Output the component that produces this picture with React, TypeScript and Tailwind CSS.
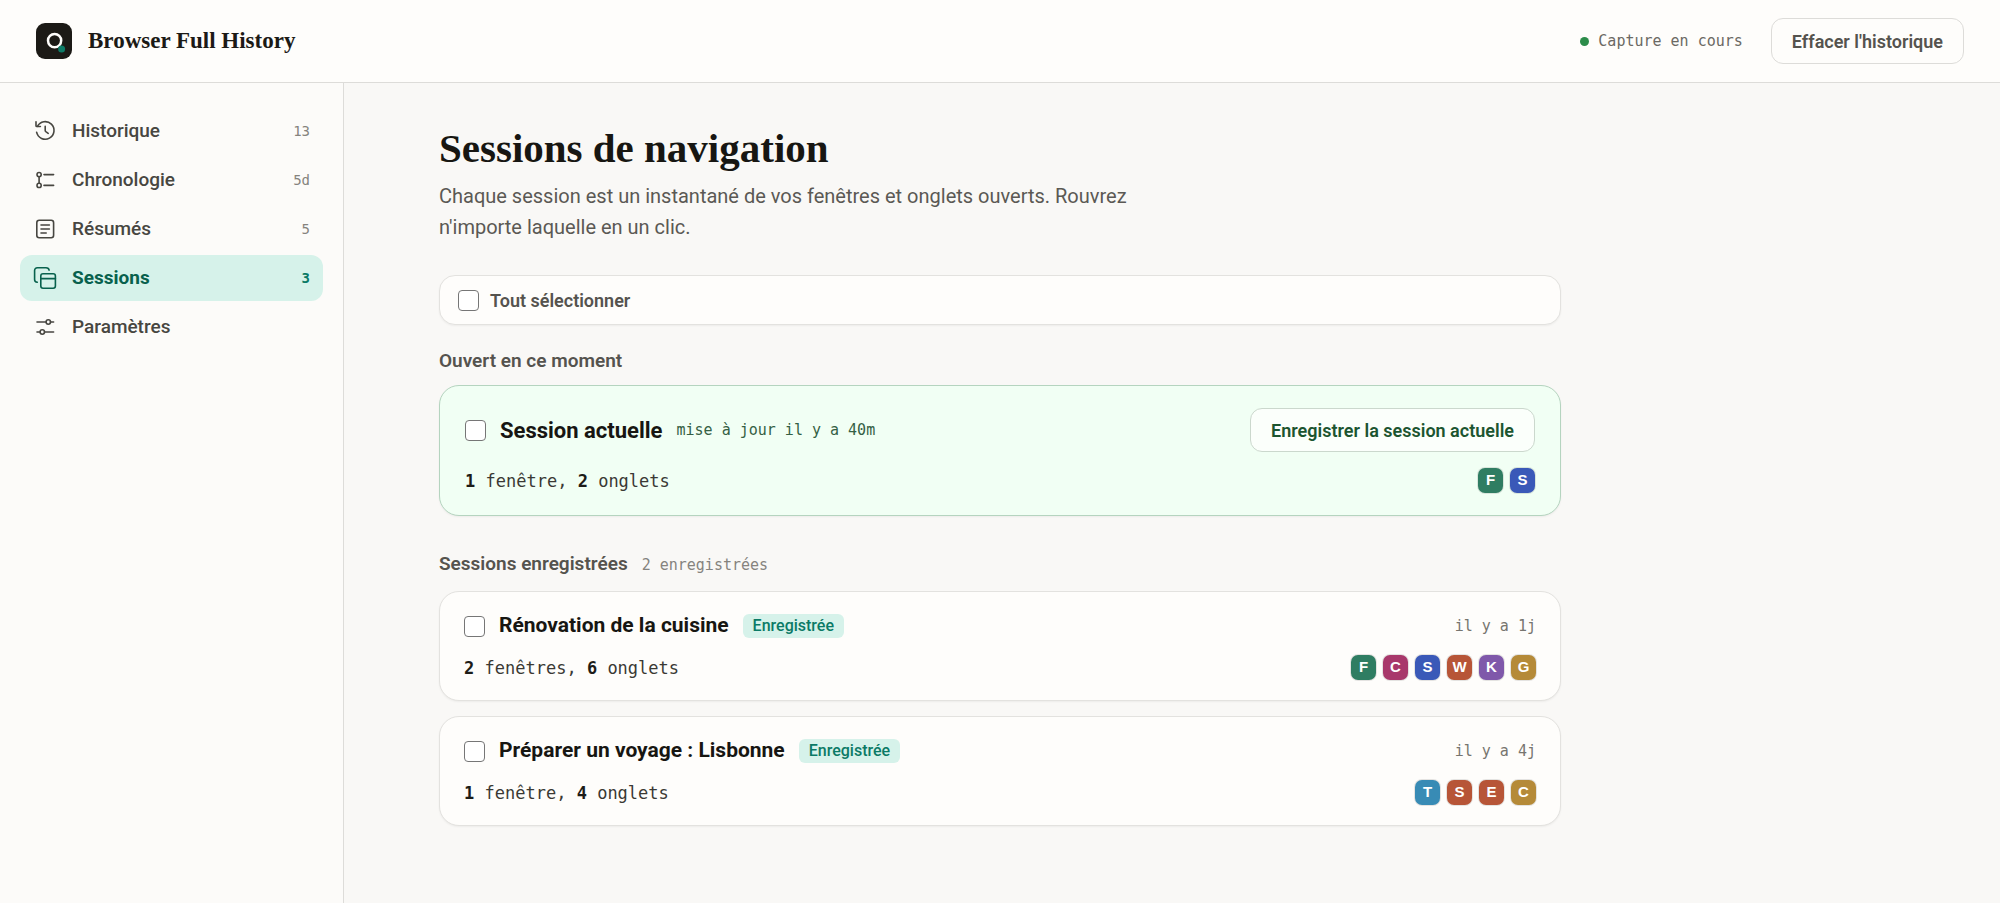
import React, { useState } from "react";

type NavItem = { id: string; label: string; count?: string; icon: React.ReactNode };
type Site = { letter: string; color: string };
type SavedSession = {
  id: string;
  title: string;
  windows: number;
  tabs: number;
  age: string;
  sites: Site[];
};

const iconClass = "size-6 shrink-0 fill-none stroke-current";

const HistoryIcon = () => (
  <svg viewBox="0 0 24 24" className={iconClass} strokeWidth="1.6" strokeLinecap="round" strokeLinejoin="round" aria-hidden="true">
    <path d="M4.4 7.4A8.8 8.8 0 1 1 3.6 13.2" />
    <path d="M3 2.8v3.9c0 .5.3.8.8.8h3.6" />
    <path d="M12.2 7.4v4.2c0 .5.2.8.6 1.1l2.4 1.7" />
  </svg>
);

const TimelineIcon = () => (
  <svg viewBox="0 0 24 24" className={iconClass} strokeWidth="1.6" strokeLinecap="round" strokeLinejoin="round" aria-hidden="true">
    <circle cx="6.1" cy="6.6" r="2.1" />
    <circle cx="6.1" cy="17.4" r="2.1" />
    <path d="M6.1 8.7v6.6M11 6.6h9.6M11 17.4h9.6" />
  </svg>
);

const SummaryIcon = () => (
  <svg viewBox="0 0 24 24" className={iconClass} strokeWidth="1.6" strokeLinecap="round" strokeLinejoin="round" aria-hidden="true">
    <rect x="3.8" y="3.3" width="16.8" height="17.4" rx="2.4" />
    <path d="M8 8h8.4M8 12h8.4M8 16h5.2" />
  </svg>
);

const SessionsIcon = () => (
  <svg viewBox="0 0 24 24" className={iconClass} strokeWidth="1.6" strokeLinecap="round" strokeLinejoin="round" aria-hidden="true">
    <rect x="7.8" y="7.8" width="14.6" height="14.4" rx="2.2" />
    <path d="M7.8 12.6h14.6" />
    <path d="M4.3 16.2C2.6 16 1.6 15 1.6 13.4V4.6C1.6 2.8 2.7 1.8 4.4 1.8H13C14.8 1.8 15.9 2.6 16.1 4.2" />
  </svg>
);

const SettingsIcon = () => (
  <svg viewBox="0 0 24 24" className={iconClass} strokeWidth="1.6" strokeLinecap="round" strokeLinejoin="round" aria-hidden="true">
    <path d="M4 7h9M17.6 7h3M4 17h3M11.6 17h9" />
    <circle cx="15.3" cy="7" r="2.2" />
    <circle cx="9.3" cy="17" r="2.2" />
  </svg>
);

const navItems: NavItem[] = [
  { id: "history", label: "Historique", count: "13", icon: <HistoryIcon /> },
  { id: "timeline", label: "Chronologie", count: "5d", icon: <TimelineIcon /> },
  { id: "summaries", label: "Résumés", count: "5", icon: <SummaryIcon /> },
  { id: "sessions", label: "Sessions", count: "3", icon: <SessionsIcon /> },
  { id: "settings", label: "Paramètres", icon: <SettingsIcon /> },
];

const green = "bg-[#2f7d62]";
const pink = "bg-[#a8386b]";
const blue = "bg-[#3a59b8]";
const rust = "bg-[#b75537]";
const violet = "bg-[#7f58aa]";
const gold = "bg-[#b58a38]";
const sky = "bg-[#388bb5]";

const currentSites: Site[] = [
  { letter: "F", color: green },
  { letter: "S", color: blue },
];

const savedSessions: SavedSession[] = [
  {
    id: "kitchen",
    title: "Rénovation de la cuisine",
    windows: 2,
    tabs: 6,
    age: "il y a 1j",
    sites: [
      { letter: "F", color: green },
      { letter: "C", color: pink },
      { letter: "S", color: blue },
      { letter: "W", color: rust },
      { letter: "K", color: violet },
      { letter: "G", color: gold },
    ],
  },
  {
    id: "lisbon",
    title: "Préparer un voyage : Lisbonne",
    windows: 1,
    tabs: 4,
    age: "il y a 4j",
    sites: [
      { letter: "T", color: sky },
      { letter: "S", color: rust },
      { letter: "E", color: rust },
      { letter: "C", color: gold },
    ],
  },
];

const allIds = ["current", ...savedSessions.map((s) => s.id)];

function Checkbox({ id, checked, onChange }: { id: string; checked: boolean; onChange: () => void }) {
  return (
    <input
      id={id}
      type="checkbox"
      checked={checked}
      onChange={onChange}
      className="size-[21px] shrink-0 appearance-none rounded border border-[#767676] bg-white checked:border-[#0b7a66] checked:bg-[#0b7a66]"
    />
  );
}

function Counts({ windows, tabs }: { windows: number; tabs: number }) {
  return (
    <p className="font-['DejaVu_Sans_Mono',monospace] text-[17px] leading-6 text-[#3a3934]">
      <strong className="font-bold text-[#1d1c18]">{windows}</strong> {windows > 1 ? "fenêtres" : "fenêtre"},{" "}
      <strong className="font-bold text-[#1d1c18]">{tabs}</strong> onglets
    </p>
  );
}

function Sites({ sites }: { sites: Site[] }) {
  return (
    <ul className="flex gap-[7px]">
      {sites.map((site) => (
        <li
          key={site.letter}
          className={`flex size-[25px] items-center justify-center rounded-[7px] font-['Liberation_Sans',sans-serif] text-[15px] font-bold text-white ring-1 ring-black/10 ${site.color}`}
        >
          {site.letter}
        </li>
      ))}
    </ul>
  );
}

export default function App() {
  const [active, setActive] = useState("sessions");
  const [selected, setSelected] = useState<string[]>([]);
  const toggle = (id: string) =>
    setSelected((prev) => (prev.includes(id) ? prev.filter((x) => x !== id) : [...prev, id]));
  const allSelected = selected.length === allIds.length;

  return (
    <div className="flex min-h-screen flex-col bg-[#f9f8f6] font-['Roboto',sans-serif] text-[#171612]">
      <header className="flex h-[83px] items-center justify-between border-b border-[#dddcd9] bg-[#fefdfb] px-9">
        <div className="flex items-center gap-4">
          <svg viewBox="0 0 36 36" className="size-9" aria-hidden="true">
            <rect width="36" height="36" rx="9" fill="#1c1a16" />
            <circle cx="18.6" cy="17.6" r="6.6" fill="none" stroke="#fefdfb" strokeWidth="2.5" />
            <circle cx="25.6" cy="26" r="3.5" fill="#0e7c68" />
          </svg>
          <span className="font-['Liberation_Serif',serif] text-[23px] font-bold text-[#1c1a16]">Browser Full History</span>
        </div>
        <div className="flex items-center gap-7">
          <p className="flex items-center gap-[9px] font-['DejaVu_Sans_Mono',monospace] text-[15px] text-[#6b6963]">
            <span className="size-[9px] rounded-full bg-[#2c8c4a]" />
            Capture en cours
          </p>
          <button type="button" className="h-[46px] rounded-xl border border-[#dddcd9] bg-[#fefdfb] px-5 text-[18px] font-semibold text-[#55534e]">
            Effacer l'historique
          </button>
        </div>
      </header>

      <div className="flex flex-1">
        <nav className="flex w-[344px] shrink-0 flex-col gap-[3px] border-r border-[#dddcd9] bg-[#fcfbf9] px-5 pt-[25px]">
          {navItems.map((item) => {
            const on = item.id === active;
            return (
              <button
                key={item.id}
                type="button"
                aria-current={on ? "page" : undefined}
                onClick={() => setActive(item.id)}
                className={`flex h-[46px] items-center gap-[15px] rounded-xl px-[13px] text-left text-[19px] ${
                  on ? "bg-[#d6f2ea] font-bold text-[#08614d]" : "font-medium text-[#474641]"
                }`}
              >
                {item.icon}
                <span className="flex-1">{item.label}</span>
                {item.count && (
                  <span className={`font-['DejaVu_Sans_Mono',monospace] text-[14px] ${on ? "text-[#0b7a66]" : "text-[#85837e]"}`}>
                    {item.count}
                  </span>
                )}
              </button>
            );
          })}
        </nav>

        <main className="min-w-0 flex-1 px-[95px] pt-10">
          <div className="max-w-[1122px]">
            <h1 className="font-['Liberation_Serif',serif] text-[41px] leading-[50px] font-bold text-[#171612]">Sessions de navigation</h1>
            <p className="mt-2 max-w-[730px] text-[20px] leading-[31px] text-[#5b5954]">
              Chaque session est un instantané de vos fenêtres et onglets ouverts. Rouvrez n'importe laquelle en un clic.
            </p>

            <div className="mt-8 flex h-[50px] items-center gap-[11px] rounded-2xl border border-[#e3e2df] bg-[#fefdfb] px-[18px] shadow-xs">
              <Checkbox id="select-all" checked={allSelected} onChange={() => setSelected(allSelected ? [] : allIds)} />
              <label htmlFor="select-all" className="text-[18px] font-semibold text-[#55534e]">
                Tout sélectionner
              </label>
            </div>

            <section>
              <h2 className="mt-6 text-[19px] leading-6 font-semibold text-[#55534e]">Ouvert en ce moment</h2>
              <article className="mt-3 rounded-[20px] border border-[#b5d4bf] bg-[#f1fff4] px-[25px] py-[22px] shadow-xs">
                <div className="flex items-center justify-between">
                  <div className="flex items-center gap-[14px]">
                    <Checkbox id="current" checked={selected.includes("current")} onChange={() => toggle("current")} />
                    <label htmlFor="current" className="text-[22px] font-bold">Session actuelle</label>
                    <span className="font-['DejaVu_Sans_Mono',monospace] text-[15px] text-[#355f44]">mise à jour il y a 40m</span>
                  </div>
                  <button type="button" className="h-11 rounded-xl border border-[#cbd8cd] bg-[#fbfffb] px-5 text-[18px] font-semibold text-[#1c5530]">
                    Enregistrer la session actuelle
                  </button>
                </div>
                <div className="mt-4 flex items-center justify-between">
                  <Counts windows={1} tabs={2} />
                  <Sites sites={currentSites} />
                </div>
              </article>
            </section>

            <section>
              <div className="mt-9 flex items-baseline gap-[14px]">
                <h2 className="text-[19px] leading-6 font-semibold text-[#55534e]">Sessions enregistrées</h2>
                <span className="font-['DejaVu_Sans_Mono',monospace] text-[15px] leading-6 text-[#85837e]">2 enregistrées</span>
              </div>
              <div className="mt-[14px] flex flex-col gap-[15px]">
                {savedSessions.map((session) => (
                  <article key={session.id} className="rounded-[20px] border border-[#e3e2df] bg-[#fefdfb] px-6 pt-[18px] pb-5 shadow-xs">
                    <div className="flex h-8 items-center justify-between">
                      <div className="flex items-center gap-[14px]">
                        <Checkbox id={session.id} checked={selected.includes(session.id)} onChange={() => toggle(session.id)} />
                        <label htmlFor={session.id} className="text-[21px] font-bold">{session.title}</label>
                        <span className="rounded-md bg-[#d6f2ea] px-[10px] text-[16px] leading-6 font-medium text-[#0b7a66]">Enregistrée</span>
                      </div>
                      <time className="font-['DejaVu_Sans_Mono',monospace] text-[15px] text-[#77756f]">{session.age}</time>
                    </div>
                    <div className="mt-[13px] flex items-center justify-between">
                      <Counts windows={session.windows} tabs={session.tabs} />
                      <Sites sites={session.sites} />
                    </div>
                  </article>
                ))}
              </div>
            </section>
          </div>
        </main>
      </div>
    </div>
  );
}
